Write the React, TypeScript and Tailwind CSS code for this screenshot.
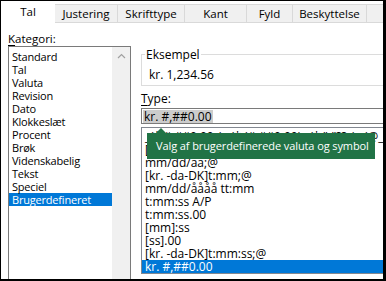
import React from 'react';

const tabs = [
  { label: 'Justering', w: 'w-[63px]' },
  { label: 'Skrifttype', w: 'w-[67px]' },
  { label: 'Kant', w: 'w-[62px]' },
  { label: 'Fyld', w: 'w-[46px]' },
  { label: 'Beskyttelse', w: 'w-[74px]' },
];

const categories = [
  'Standard',
  'Tal',
  'Valuta',
  'Revision',
  'Dato',
  'Klokkeslæt',
  'Procent',
  'Brøk',
  'Videnskabelig',
  'Tekst',
  'Speciel',
  'Brugerdefineret',
];

const formats = [
  '_(* #,##0.00_);_(* (#,##0.00);_(* "-"??_);_(@_)',
  '[$-da-DK]d. mmmm åååå;@',
  'mm/dd/aa;@',
  '[kr. -da-DK]t:mm;@',
  'mm/dd/åååå tt:mm',
  't:mm:ss A/P',
  't:mm:ss.00',
  '[mm]:ss',
  '[ss].00',
  '[kr. -da-DK]t:mm:ss;@',
  'kr. #,##0.00',
];

export default function App() {
  return (
    <div
      className="relative w-[386px] h-[281px] overflow-hidden bg-white border-l border-t border-r-[3px] border-b-2 border-black text-black text-[12px]"
      style={{ fontFamily: '"Open Sans", "Noto Sans", sans-serif' }}
    >
      {/* Faner */}
      <div className="flex h-[22px] text-[11.5px]">
        <div className="w-[54px] h-[22px] bg-white flex items-center justify-center leading-[14px]">Tal</div>
        {tabs.map((t) => (
          <div
            key={t.label}
            className={`${t.w} mt-[3px] h-[19px] bg-[#f0f0f0] border-t border-r border-b border-[#d9d9d9] flex items-center justify-center leading-[14px]`}
          >
            {t.label}
          </div>
        ))}
        <div className="flex-1 mt-[3px] h-[19px] bg-[#f0f0f0] border-t border-b border-[#d9d9d9]" />
      </div>

      <div className="flex">
        {/* Kategori */}
        <div className="ml-[7px] w-[123px] shrink-0">
          <div className="mt-[9px] h-[14px] leading-[14px] text-[11.5px]">
            <span className="underline underline-offset-2">K</span>ategori:
          </div>
          <div className="flex h-[240px] border border-[#7a7a7a] text-[11px] tracking-[-0.2px]">
            <div className="flex-1 pt-[3px]">
              {categories.map((c) => (
                <div
                  key={c}
                  className={`h-[13px] leading-[13px] pl-[3px] ${
                    c === 'Brugerdefineret' ? 'bg-[#0078d7] text-white' : ''
                  }`}
                >
                  {c}
                </div>
              ))}
            </div>
            <div className="w-[18px] bg-[#f0f0f0] flex justify-center pt-[6px]">
              <svg width="9" height="6" viewBox="0 0 9 6">
                <path d="M1 5 L4.5 1.5 L8 5" fill="none" stroke="#a0a0a0" strokeWidth="1.2" />
              </svg>
            </div>
          </div>
        </div>

        {/* Højre side */}
        <div className="ml-[10px] flex-1 min-w-0">
          <div className="relative mt-[31px] h-[32px] border border-[#dcdcdc] w-[260px]">
            <div className="absolute -top-[7px] left-[3px] bg-white px-[1px] leading-[14px]">Eksempel</div>
            <div className="absolute top-[13px] left-[7px] leading-[14px]">kr. 1,234.56</div>
          </div>
          <div className="mt-[6px] h-[14px] leading-[14px]">
            <span className="underline underline-offset-2">T</span>ype:
          </div>
          <div className="mt-[2px] h-[16px] w-[260px] border border-[#7a7a7a] flex items-center pl-[1px]">
            <span className="bg-[#cccccc] h-[13px] leading-[13px] px-[1px]">kr. #,##0.00</span>
          </div>
          <div className="mt-[3px] h-[147px] w-[260px] border border-[#828790] pt-[2px] overflow-hidden">
            {formats.map((f, i) => (
              <div
                key={i}
                className={`h-[13px] leading-[13px] pl-[3px] whitespace-nowrap ${
                  i === formats.length - 1 ? 'bg-[#0078d7] text-white' : ''
                }`}
              >
                {f}
              </div>
            ))}
          </div>
        </div>
      </div>

      {/* Værktøjstip */}
      <div className="absolute left-[146px] top-[132px] w-[228px] h-[26px] bg-[#217346] text-white text-[11px] tracking-[-0.1px] flex items-center pl-[9px] whitespace-nowrap">
        Valg af brugerdefinerede valuta og symbol
      </div>
      <svg className="absolute left-[154px] top-[126px]" width="12" height="7" viewBox="0 0 12 7">
        <path d="M0 7 L6 1 L12 7 Z" fill="#217346" />
      </svg>
    </div>
  );
}
